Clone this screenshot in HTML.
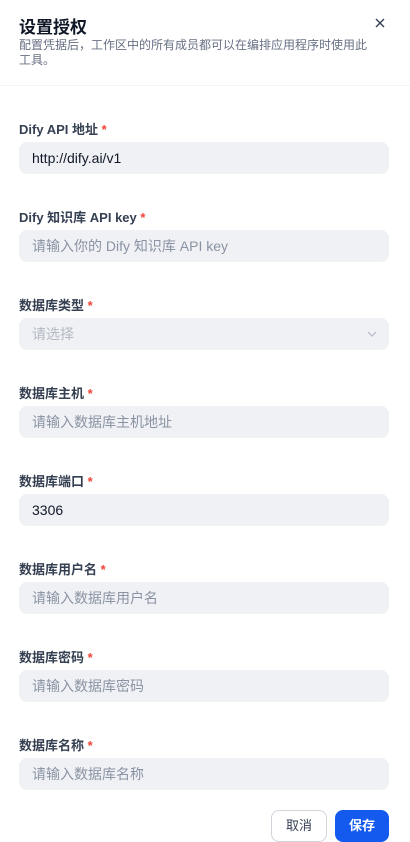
<!DOCTYPE html><html><head><meta charset="utf-8"><style>
*{margin:0;padding:0;box-sizing:border-box}
body{width:410px;height:842px;background:#fff;font-family:"Liberation Sans","Noto Sans CJK SC",sans-serif;position:relative;overflow:hidden}
.t{position:absolute;left:19px;top:13px;font-size:17px;font-weight:700;color:#101828}
.s{position:absolute;left:19px;top:38px;width:352px;font-size:12px;line-height:15px;color:#676f83}
.x{position:absolute;left:375px;top:18px}
.hr{position:absolute;left:0;right:0;top:85px;border-top:1px solid #f2f4f7}
.l{position:absolute;left:19px;font-size:13px;font-weight:700;color:#354052}
.l b{color:#f04438;font-weight:700}
.i{position:absolute;left:19px;width:370px;height:32px;border-radius:8px;background:#f0f1f5;padding-left:13px;line-height:32px;font-size:14px;color:#8a93a3}
.btn{position:absolute;top:810px;height:32px;border-radius:8px;font-size:13px;line-height:30px;text-align:center}
</style></head><body>
<div class="t">设置授权</div>
<div class="s">配置凭据后，工作区中的所有成员都可以在编排应用程序时使用此工具。</div>
<svg class="x" width="10" height="10" viewBox="0 0 10 10"><path d="M1 1l8 8M9 1l-8 8" stroke="#354052" stroke-width="1.4"/></svg>
<div class="hr"></div>
<div class="l" style="top:119px">Dify API 地址 <b>*</b></div>
<div class="i" style="top:142px;color:#101828">http://dify.ai/v1</div>
<div class="l" style="top:207px">Dify 知识库 API key <b>*</b></div>
<div class="i" style="top:230px">请输入你的 Dify 知识库 API key</div>
<div class="l" style="top:295px">数据库类型 <b>*</b></div>
<div class="i" style="top:318px;color:#b4bac4">请选择<svg style="position:absolute;right:12px;top:13px" width="10" height="6" viewBox="0 0 10 6"><path d="M1 1l4 4 4-4" fill="none" stroke="#b4bac4" stroke-width="1.2"/></svg></div>
<div class="l" style="top:383px">数据库主机 <b>*</b></div>
<div class="i" style="top:406px">请输入数据库主机地址</div>
<div class="l" style="top:471px">数据库端口 <b>*</b></div>
<div class="i" style="top:494px;color:#101828">3306</div>
<div class="l" style="top:559px">数据库用户名 <b>*</b></div>
<div class="i" style="top:582px">请输入数据库用户名</div>
<div class="l" style="top:647px">数据库密码 <b>*</b></div>
<div class="i" style="top:670px">请输入数据库密码</div>
<div class="l" style="top:735px">数据库名称 <b>*</b></div>
<div class="i" style="top:758px">请输入数据库名称</div>
<div class="btn" style="left:271px;width:56px;border:1px solid #d0d5dc;color:#354052">取消</div>
<div class="btn" style="left:335px;width:54px;background:#155aef;color:#fff;line-height:32px;font-weight:700">保存</div>
</body></html>
